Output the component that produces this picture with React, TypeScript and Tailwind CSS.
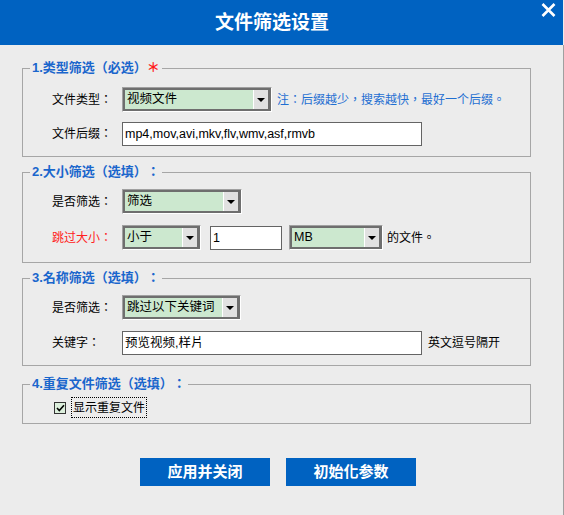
import React from 'react'

const font = "font-['Liberation_Sans','Noto_Sans_CJK_TC',sans-serif] [text-spacing-trim:space-all]"

function Select({ width, value }: { width: number; value: string }) {
  return (
    <div
      className="h-[25px] flex border border-t-[#a0a0a0] border-l-[#a0a0a0] border-r-white border-b-white"
      style={{ width }}
    >
      <div className="flex-1 flex border-2 border-[#6e6e6e] bg-[#cce8cf]">
        <div className="flex-1 pl-[2px] text-[12.5px] leading-[19px] text-black truncate">{value}</div>
        <div className="w-[16px] bg-[#e1e1e1] border-l border-white border-r border-r-[#6e6e6e] flex items-center justify-center">
          <div className="w-0 h-0 border-l-[4px] border-r-[4px] border-t-[4px] border-l-transparent border-r-transparent border-t-black" />
        </div>
      </div>
    </div>
  )
}

function TextInput({ width, value }: { width: number; value: string }) {
  return (
    <div
      className="h-[24px] border border-[#646464] bg-white pl-[2px] text-[12.5px] leading-[22px] text-black"
      style={{ width }}
    >
      {value}
    </div>
  )
}

function Group({ title, star, children, className }: { title: string; star?: boolean; children: React.ReactNode; className: string }) {
  return (
    <fieldset className={`ml-[22px] w-[509px] border border-[#a6a6a6] ${className}`}>
      <legend className="ml-[7px] px-[2px] text-[13px] leading-[18px] font-bold text-[#1a66cc]">
        {title}
        {star && <span className="text-[#ff1a1a] font-bold text-[13px]">＊</span>}
      </legend>
      {children}
    </fieldset>
  )
}

function Label({ children, red }: { children: React.ReactNode; red?: boolean }) {
  return (
    <div className={`w-[70px] shrink-0 text-[12px] ${red ? 'text-[#ff2020]' : 'text-black'}`}>{children}</div>
  )
}

export default function App() {
  return (
    <div className={`w-[564px] h-[515px] bg-[#ececec] flex flex-col ${font}`}>
      <div className="h-[45px] w-[563px] bg-[#0062c1] relative flex items-center justify-center pr-[19px]">
        <span className="text-white text-[19px] font-bold leading-none">文件筛选设置</span>
        <svg className="absolute right-[7px] top-[3px]" width="15" height="14" viewBox="0 0 15 14">
          <path d="M1.5 1 L13.5 13 M13.5 1 L1.5 13" stroke="white" strokeWidth="2.6" />
        </svg>
      </div>

      <div className="flex-1 flex flex-col border-r border-[#a0a0a0] w-[564px]">
        <Group title="1.类型筛选（必选）" star className="mt-[14px] pt-[10px] pb-[10px]">
          <div className="flex flex-col gap-[9px] pl-[29px]">
            <div className="h-[25px] flex items-center">
              <Label>文件类型：</Label>
              <Select width={150} value="视频文件" />
              <span className="ml-[5px] text-[12px] text-[#1f6fd2]">注：后缀越少，搜索越快，最好一个后缀。</span>
            </div>
            <div className="h-[25px] flex items-center">
              <Label>文件后缀：</Label>
              <TextInput width={300} value="mp4,mov,avi,mkv,flv,wmv,asf,rmvb" />
            </div>
          </div>
        </Group>

        <Group title="2.大小筛选（选填）：" className="mt-[6px] pt-[8px] pb-[12px]">
          <div className="flex flex-col gap-[11px] pl-[29px]">
            <div className="h-[25px] flex items-center">
              <Label>是否筛选：</Label>
              <Select width={120} value="筛选" />
            </div>
            <div className="h-[25px] flex items-center">
              <Label red>跳过大小：</Label>
              <Select width={79} value="小于" />
              <div className="ml-[9px]">
                <TextInput width={72} value="1" />
              </div>
              <div className="ml-[7px]">
                <Select width={94} value="MB" />
              </div>
              <span className="ml-[4px] text-[12px] text-black">的文件。</span>
            </div>
          </div>
        </Group>

        <Group title="3.名称筛选（选填）：" className="mt-[6px] pt-[8px] pb-[10px]">
          <div className="flex flex-col gap-[10px] pl-[29px]">
            <div className="h-[25px] flex items-center">
              <Label>是否筛选：</Label>
              <Select width={119} value="跳过以下关键词" />
            </div>
            <div className="h-[25px] flex items-center">
              <Label>关键字：</Label>
              <TextInput width={300} value="预览视频,样片" />
              <span className="ml-[6px] text-[12px] text-black">英文逗号隔开</span>
            </div>
          </div>
        </Group>

        <Group title="4.重复文件筛选（选填）：" className="mt-[9px] pt-[4px] pb-[5px]">
          <div className="h-[21px] flex items-center pl-[31px]">
            <div className="w-[12px] h-[12px] border border-[#333] bg-[#dcefdc] flex items-center justify-center">
              <svg width="9" height="8" viewBox="0 0 9 8">
                <path d="M1 4 L3.3 6.5 L8 1.2" stroke="black" strokeWidth="1.6" fill="none" />
              </svg>
            </div>
            <div className="ml-[5px] h-[21px] px-[1px] border border-dotted border-black flex items-center text-[12px] text-black">
              显示重复文件
            </div>
          </div>
        </Group>

        <div className="mt-[34px] ml-[140px] flex gap-[16px]">
          <button className="w-[130px] h-[28px] bg-[#0062c1] text-white text-[15px] font-bold">应用并关闭</button>
          <button className="w-[130px] h-[28px] bg-[#0062c1] text-white text-[15px] font-bold">初始化参数</button>
        </div>
      </div>
    </div>
  )
}
